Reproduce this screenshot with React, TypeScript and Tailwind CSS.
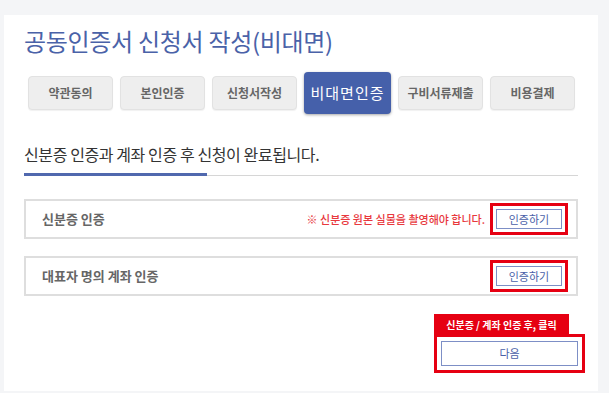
import React from "react";

const font = { fontFamily: '"Noto Sans CJK KR", "Noto Sans", sans-serif' };

const steps = ["약관동의", "본인인증", "신청서작성", "비대면인증", "구비서류제출", "비용결제"];
const activeStep = "비대면인증";

function AuthButton() {
  return (
    <span className="inline-flex border-[3px] border-[#e60012] p-[3px]">
      <button className="flex h-[20px] w-[66px] items-center justify-center border border-[#7d8fc6] bg-white text-[11px] text-[#4a5fa8]">
        인증하기
      </button>
    </span>
  );
}

function AuthRow({ label, note }: { label: string; note?: string }) {
  return (
    <div className="flex h-[40px] items-center border-2 border-[#dedede] pl-[16px] pr-[8px]">
      <div className="flex-1 text-[13px] font-semibold text-[#666]">{label}</div>
      {note && <span className="mr-[5px] text-[11px] font-medium text-[#e8383d]">{note}</span>}
      <AuthButton />
    </div>
  );
}

export default function App() {
  return (
    <div className="h-[393px] w-[609px] overflow-hidden bg-[#f4f5f7] pt-[15px]" style={font}>
      <div className="ml-[4px] h-[376px] w-[594px] bg-white px-[20px] pt-[10px]">
        <h1 className="text-[24px] leading-[32px] tracking-[-0.3px] text-[#4a62a8]">
          공동인증서 신청서 작성(비대면)
        </h1>

        <nav className="mt-[15px] flex items-center gap-[7px] pl-[4px]">
          {steps.map((s) =>
            s === activeStep ? (
              <div
                key={s}
                className="flex h-[42px] w-[87px] items-center justify-center rounded-[4px] bg-[#4560aa] text-[15px] tracking-[1px] text-white shadow-[0_1px_3px_rgba(0,0,0,0.35)]"
              >
                {s}
              </div>
            ) : (
              <div
                key={s}
                className="flex h-[34px] w-[85px] items-center justify-center rounded-[4px] border border-[#e2e2e2] bg-[#eeeeee] text-[12px] font-semibold text-[#666] shadow-[0_1px_1px_rgba(0,0,0,0.06)]"
              >
                {s}
              </div>
            ),
          )}
        </nav>

        <div className="mt-[29px]">
          <p className="text-[16px] leading-[22px] tracking-[-0.4px] text-[#333]">
            신분증 인증과 계좌 인증 후 신청이 완료됩니다.
          </p>
          <div className="mt-[8px] flex items-end">
            <div className="h-[3px] w-[183px] bg-[#5068ae]" />
            <div className="h-px flex-1 bg-[#d6d6d6]" />
          </div>
        </div>

        <div className="mt-[23px] flex flex-col gap-[17px]">
          <AuthRow label="신분증 인증" note="※ 신분증 원본 실물을 촬영해야 합니다." />
          <AuthRow label="대표자 명의 계좌 인증" />
        </div>

        <div className="-mr-[7px] mt-[18px] flex flex-col items-end">
          <div className="w-[151px]">
            <div className="flex h-[20px] w-[135px] items-center justify-center bg-[#e60012] text-[10px] font-bold text-white">
              신분증 / 계좌 인증 후, 클릭
            </div>
            <div className="border-[3px] border-[#e60012] p-[4px]">
              <button className="flex h-[25px] w-full items-center justify-center border border-[#7d8fc6] bg-white text-[11px] text-[#4a5fa8]">
                다음
              </button>
            </div>
          </div>
        </div>
      </div>
    </div>
  );
}
